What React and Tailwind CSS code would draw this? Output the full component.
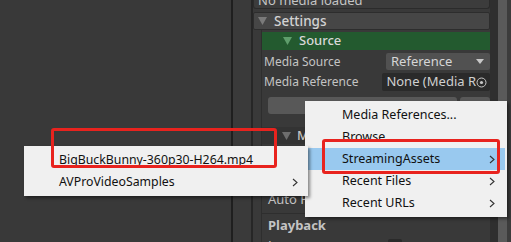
import React from "react";

const Tri = ({ className = "" }) => (
  <svg width="9" height="8" viewBox="0 0 9 8" className={className}>
    <path d="M0 0 H9 L4.5 8 Z" fill="currentColor" />
  </svg>
);

const Chevron = () => (
  <svg width="6" height="9" viewBox="0 0 6 9" className="text-[#333]">
    <path d="M1 1 L5 4.5 L1 8" fill="none" stroke="currentColor" strokeWidth="1.1" />
  </svg>
);

function MenuItem({ label, arrow, active }) {
  return (
    <div
      className={`flex h-[22px] items-center pl-[35px] pr-[10px] ${active ? "bg-[#99c9ef]" : ""}`}
    >
      <span className="flex-1 whitespace-nowrap">{label}</span>
      {arrow && <Chevron />}
    </div>
  );
}

export default function App() {
  return (
    <div
      className="relative flex h-[242px] w-[511px] overflow-hidden bg-[#393939] text-[#c4c4c4]"
      style={{ fontFamily: "'Noto Sans', 'Open Sans', sans-serif" }}
    >
      {/* left empty area */}
      <div className="w-[231px] shrink-0" />
      <div className="w-[2px] shrink-0 bg-[#1f1f1f]" />
      <div className="w-[18px] shrink-0 bg-[#3a3a3a]" />
      <div className="w-[2px] shrink-0 bg-[#262626]" />

      {/* inspector panel */}
      <div className="flex w-[237px] shrink-0 flex-col text-[12px]">
        <div className="h-[9px] shrink-0 overflow-hidden rounded-b-[3px] border border-t-0 border-[#2b2b2b] bg-[#3c3c3c]">
          <div className="-mt-[8px] whitespace-nowrap pl-[4px] text-[13px] leading-[17px]">No media loaded</div>
        </div>
        <div className="mt-[3px] flex h-[18px] shrink-0 items-center gap-[7px] rounded-[2px] border border-[#2d2d2d] bg-[#464646] pl-[4px] text-[13.5px] font-medium text-[#d2d2d2]">
          <Tri className="text-[#7a7a7a]" />
          <span>Settings</span>
        </div>
        <div className="ml-[8px] flex shrink-0 flex-col border-l border-[#2e2e2e]">
          <div className="mt-[2px] flex h-[18px] shrink-0 items-center gap-[7px] bg-[#235a2f] pl-[21px] text-[13px] font-medium text-[#d8d8d8]">
            <Tri className="text-[#5f9e6c]" />
            <span>Source</span>
          </div>
          <div className="mt-[3px] flex h-[17px] shrink-0 items-center pl-[2px]">
            <span className="w-[122px]">Media Source</span>
            <div className="flex h-[17px] flex-1 items-center rounded-[2px] bg-[#515151] pl-[5px] pr-[6px] text-[13px] text-[#d6d6d6]">
              <span className="flex-1">Reference</span>
              <svg width="8" height="5" viewBox="0 0 8 5"><path d="M0 0H8L4 5Z" fill="#c8c8c8" /></svg>
            </div>
          </div>
          <div className="mt-[3px] flex h-[18px] shrink-0 items-center pl-[2px]">
            <span className="w-[122px]">Media Reference</span>
            <div className="flex h-[18px] flex-1 items-center rounded-[2px] bg-[#2a2a2a] pl-[4px] pr-[3px] text-[13px] text-[#d0d0d0]">
              <span className="flex-1 overflow-hidden whitespace-nowrap">None (Media R</span>
              <svg width="11" height="11" viewBox="0 0 11 11">
                <circle cx="5.5" cy="5.5" r="4.5" fill="none" stroke="#c8c8c8" strokeWidth="1" />
                <circle cx="5.5" cy="5.5" r="1.6" fill="#c8c8c8" />
              </svg>
            </div>
          </div>
          <div className="mt-[6px] flex h-[17px] shrink-0 gap-[3px] pl-[6px]">
            <div className="w-[189px] rounded-[3px] bg-[#585858]" />
            <div className="flex-1 rounded-[3px] bg-[#585858]" />
          </div>
          <div className="mt-[13px] flex h-[17px] shrink-0 items-center gap-[6px] bg-[#333333] pl-[20px] text-[13px] font-medium">
            <Tri className="text-[#6e6e6e]" />
            <span>Media Properties</span>
          </div>
          <div className="mt-[48px] flex h-[16px] shrink-0 items-center pl-[6px] text-[13px]">Auto Play</div>
          <div className="mt-[5px] h-[1px] shrink-0 bg-[#2e2e2e]" />
          <div className="mt-[4px] flex h-[16px] shrink-0 items-center pl-[6px] text-[13px] font-bold">Playback</div>
          <div className="mt-[4px] flex h-[16px] shrink-0 items-center pl-[6px] text-[13px]">
            <span className="w-[120px]">Loop</span>
            <div className="h-[14px] w-[14px] rounded-[2px] bg-[#2a2a2a]" />
          </div>
        </div>
      </div>

      {/* scrollbar column */}
      <div className="w-[8px] shrink-0 bg-[#2f2f2f]" />
      <div className="w-[9px] shrink-0 bg-[#5a5a5a]" />
      <div className="flex-1 bg-[#3c3c3c]" />

      {/* context menu */}
      <div className="absolute left-[305px] top-[101px] w-[202px] bg-[#f0f0f0] px-[2px] py-[3px] text-[12.5px] text-[#111] shadow-[2px_2px_3px_rgba(0,0,0,0.45)]">
        <MenuItem label="Media References..." />
        <MenuItem label="Browse" />
        <MenuItem label="StreamingAssets" arrow active />
        <MenuItem label="Recent Files" arrow />
        <MenuItem label="Recent URLs" arrow />
      </div>

      {/* submenu */}
      <div className="absolute left-[24px] top-[146px] w-[284px] bg-[#f0f0f0] py-[3px] text-[12.3px] text-[#111] shadow-[2px_2px_3px_rgba(0,0,0,0.45)]">
        <MenuItem label="BigBuckBunny-360p30-H264.mp4" />
        <MenuItem label="AVProVideoSamples" arrow />
      </div>

      {/* red annotation boxes */}
      <div className="absolute left-[322px] top-[139px] h-[35px] w-[178px] rounded-[3px] border-[3px] border-[#e8231e]" />
      <div className="absolute left-[51px] top-[128px] h-[40px] w-[226px] rounded-[3px] border-[3px] border-[#e8231e]" />
    </div>
  );
}
